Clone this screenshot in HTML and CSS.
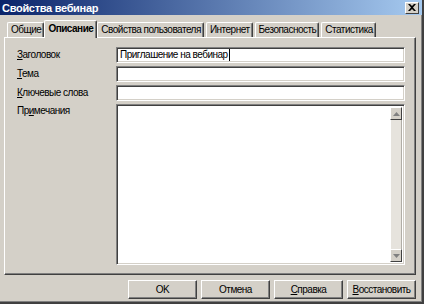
FILE: index.html
```html
<!DOCTYPE html>
<html lang="ru">
<head>
  <meta charset="UTF-8">
  <title>Свойства вебинар</title>
  <link rel="stylesheet" href="styles.css">
</head>
<body>
  <div class="window">
    <header class="titlebar">
      <span class="title">Свойства вебинар</span>
      <span class="close-btn">
        <svg width="8" height="7" viewBox="0 0 8 7"><path d="M0 0h2l2 2 2-2h2L5 3.5 8 7H6L4 5 2 7H0l3-3.5z" fill="#000"/></svg>
      </span>
    </header>

    <nav class="tabs">
      <span class="tab">Общие</span>
      <span class="tab active">Описание</span>
      <span class="tab">Свойства пользователя</span>
      <span class="tab">Интернет</span>
      <span class="tab">Безопасность</span>
      <span class="tab">Статистика</span>
    </nav>

    <section class="panel">
      <div class="form">
        <label class="label"><u>З</u>аголовок</label>
        <div class="field">Приглашение на вебинар<span class="caret"></span></div>

        <label class="label"><u>Т</u>ема</label>
        <div class="field"></div>

        <label class="label"><u>К</u>лючевые слова</label>
        <div class="field"></div>

        <label class="label">Пр<u>и</u>мечания</label>
        <div class="field notes">
          <div class="scrollbar">
            <span class="sb-btn">
              <svg width="7" height="4" viewBox="0 0 7 4"><path d="M3.5 0L7 4H0z" fill="#808080"/></svg>
            </span>
            <span class="sb-track"></span>
            <span class="sb-btn">
              <svg width="7" height="4" viewBox="0 0 7 4"><path d="M0 0h7L3.5 4z" fill="#808080"/></svg>
            </span>
          </div>
        </div>
      </div>
    </section>

    <footer class="buttons">
      <button class="btn">OK</button>
      <button class="btn">Отмена</button>
      <button class="btn"><u>С</u>правка</button>
      <button class="btn"><u>В</u>осстановить</button>
    </footer>
  </div>
</body>
</html>
```

FILE: styles.css
```css
* {
  margin: 0;
  padding: 0;
  box-sizing: border-box;
}

body {
  width: 424px;
  height: 304px;
  overflow: hidden;
  background: #d4d0c8;
  font-family: "Liberation Sans", Arial, sans-serif;
  font-size: 10px;
  letter-spacing: -0.5px;
  color: #000;
}

/* Окно */
.window {
  width: 424px;
  height: 304px;
  border-right: 2px solid #404040;
  border-bottom: 2px solid #404040;
  box-shadow: inset -1px -1px 0 #808080;
  display: flex;
  flex-direction: column;
}

.titlebar {
  height: 15px;
  display: flex;
  align-items: center;
  justify-content: space-between;
  padding: 0 3px 0 2px;
  background: linear-gradient(90deg, #0a246a, #a6caf0);
}

.title {
  color: #fff;
  font-weight: bold;
  font-size: 11px;
  letter-spacing: -0.3px;
}

.close-btn {
  width: 14px;
  height: 12px;
  display: flex;
  align-items: center;
  justify-content: center;
  background: #d4d0c8;
  border-top: 1px solid #fff;
  border-left: 1px solid #fff;
  border-right: 1px solid #404040;
  border-bottom: 1px solid #404040;
}

/* Вкладки */
.tabs {
  display: flex;
  align-items: flex-end;
  height: 22px;
  padding-left: 7px;
  position: relative;
  z-index: 1;
}

.tab {
  height: 15px;
  line-height: 14px;
  padding: 0 2px 0 3px;
  white-space: nowrap;
  border-top: 1px solid #fff;
  border-left: 1px solid #fff;
  border-right: 1px solid #404040;
  box-shadow: inset -1px 0 0 #808080;
  margin-right: 2px;
  border-radius: 2px 2px 0 0;
}

.tab.active {
  height: 18px;
  line-height: 16px;
  font-weight: bold;
  margin: 0 0 -1px -2px;
  padding: 0 3px;
  background: #d4d0c8;
}

/* Панель */
.panel {
  margin: 0 6px 0 4px;
  height: 238px;
  border-top: 1px solid #fff;
  border-left: 1px solid #fff;
  border-right: 1px solid #404040;
  border-bottom: 1px solid #404040;
  box-shadow: inset -1px -1px 0 #808080;
  padding: 9px 10px 9px 12px;
}

.form {
  display: grid;
  grid-template-columns: 99px 1fr;
  grid-template-rows: 16px 16px 16px 1fr;
  row-gap: 3px;
  height: 100%;
}

.label {
  line-height: 16px;
}

.label:last-of-type {
  line-height: 14px;
}

.field {
  background: #fff;
  border-top: 1px solid #808080;
  border-left: 1px solid #808080;
  border-right: 1px solid #fff;
  border-bottom: 1px solid #fff;
  box-shadow: inset 1px 1px 0 #404040, inset -1px -1px 0 #d4d0c8;
  padding: 0 3px;
  line-height: 14px;
  display: flex;
  align-items: center;
}

.caret {
  width: 1px;
  height: 12px;
  background: #000;
  margin-left: 1px;
}

.notes {
  justify-content: flex-end;
  align-items: stretch;
  padding: 2px;
}

.scrollbar {
  width: 12px;
  display: flex;
  flex-direction: column;
}

.sb-btn {
  height: 13px;
  display: flex;
  align-items: center;
  justify-content: center;
  background: #d4d0c8;
  border-top: 1px solid #fff;
  border-left: 1px solid #fff;
  border-right: 1px solid #404040;
  border-bottom: 1px solid #404040;
}

.sb-track {
  flex: 1;
  background: #e6e3dd;
  border-left: 1px solid #fff;
  border-right: 1px solid #b0ada6;
}

/* Кнопки */
.buttons {
  display: flex;
  justify-content: flex-end;
  gap: 4px;
  padding: 5px 6px 0 0;
}

.btn {
  width: 69px;
  height: 19px;
  font-family: "Liberation Sans", Arial, sans-serif;
  font-size: 10px;
  letter-spacing: -0.5px;
  background: #d4d0c8;
  color: #000;
  border-top: 1px solid #fff;
  border-left: 1px solid #fff;
  border-right: 1px solid #404040;
  border-bottom: 1px solid #404040;
  box-shadow: inset -1px -1px 0 #808080;
}
```
